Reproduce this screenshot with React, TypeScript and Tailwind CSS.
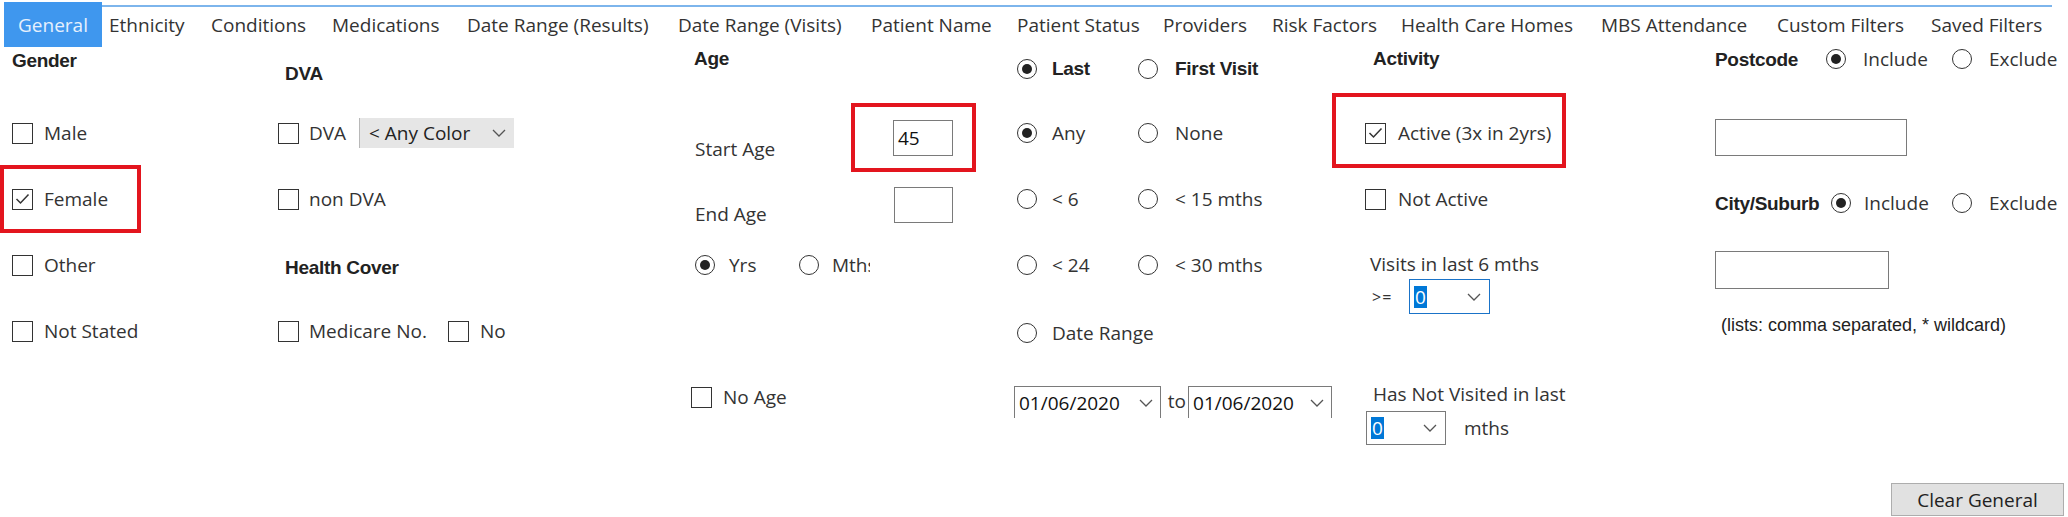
import React from "react";

const tabs: [string, string][] = [
  ["Ethnicity", "w-[102px]"],
  ["Conditions", "w-[121px]"],
  ["Medications", "w-[135px]"],
  ["Date Range (Results)", "w-[211px]"],
  ["Date Range (Visits)", "w-[193px]"],
  ["Patient Name", "w-[146px]"],
  ["Patient Status", "w-[146px]"],
  ["Providers", "w-[109px]"],
  ["Risk Factors", "w-[129px]"],
  ["Health Care Homes", "w-[200px]"],
  ["MBS Attendance", "w-[176px]"],
  ["Custom Filters", "w-[154px]"],
  ["Saved Filters", "w-[120px]"],
];

function Check({ checked = false }: { checked?: boolean }) {
  return (
    <span className="flex h-[21px] w-[21px] shrink-0 items-center justify-center border-[1.5px] border-[#333] bg-white">
      {checked && (
        <svg width="15" height="12" viewBox="0 0 15 12">
          <polyline points="1.5,6 5.5,10 13.5,1.5" fill="none" stroke="#333" strokeWidth="1.5" />
        </svg>
      )}
    </span>
  );
}

function Radio({ checked = false }: { checked?: boolean }) {
  return (
    <span className="flex h-[20px] w-[20px] shrink-0 items-center justify-center rounded-full border-[1.5px] border-[#333] bg-white">
      {checked && <span className="h-[10px] w-[10px] rounded-full bg-[#222]" />}
    </span>
  );
}

function Chevron() {
  return (
    <svg width="14" height="8" viewBox="0 0 14 8">
      <polyline points="1,1 7,7 13,1" fill="none" stroke="#555" strokeWidth="1.3" />
    </svg>
  );
}

function H({ children }: { children: React.ReactNode }) {
  return (
    <span className="font-['Liberation_Sans',Arial,sans-serif] text-[19px] font-bold tracking-[-0.3px] text-[#222]">
      {children}
    </span>
  );
}

function CheckRow({ label, checked }: { label: string; checked?: boolean }) {
  return (
    <div className="flex h-[66px] items-center gap-[11px]">
      <Check checked={checked} />
      <span>{label}</span>
    </div>
  );
}

function RadioPair({ a, b, aOn, bold }: { a: string; b?: string; aOn?: boolean; bold?: boolean }) {
  const txt = bold
    ? "whitespace-nowrap font-['Liberation_Sans',Arial,sans-serif] font-bold tracking-[-0.3px] text-[#222]"
    : "whitespace-nowrap";
  return (
    <div className="flex items-center pl-[3px]">
      <div className="flex w-[121px] items-center gap-[15px]">
        <Radio checked={aOn} />
        <span className={txt}>{a}</span>
      </div>
      {b && (
        <div className="flex items-center gap-[17px]">
          <Radio />
          <span className={txt}>{b}</span>
        </div>
      )}
    </div>
  );
}

function Combo({ blue }: { blue?: boolean }) {
  return (
    <div
      className={
        blue
          ? "flex h-[35px] w-[81px] items-center justify-between border border-[#1a73c8] bg-white pl-[4px] pr-[8px]"
          : "flex h-[34px] w-[80px] items-center justify-between border border-[#7a7a7a] bg-white pl-[4px] pr-[8px]"
      }
    >
      <span className="bg-[#0078d7] px-[1px] leading-[22px] text-white">0</span>
      <Chevron />
    </div>
  );
}

export default function App() {
  return (
    <div className="h-[517px] w-[2068px] overflow-hidden bg-white font-['Open_Sans',sans-serif] text-[19px] leading-[24px] text-[#333]">
      {/* tabs */}
      <div className="flex h-[47px]">
        <div className="ml-[4px] mt-[2px] flex h-[45px] w-[98px] items-center bg-[#3f97ee] pl-[14px] text-[#e6f0fd]">
          General
        </div>
        <div className="mr-[16px] mt-[5px] flex h-[38px] flex-1 items-center border-t-2 border-[#7db5ec] pl-[7px]">
          {tabs.map(([t, w]) => (
            <span key={t} className={w + " whitespace-nowrap"}>
              {t}
            </span>
          ))}
        </div>
      </div>

      <div className="flex h-[470px]">
        {/* gender */}
        <div className="ml-[12px] flex w-[266px] flex-col">
          <div className="flex h-[28px] items-center">
            <H>Gender</H>
          </div>
          <div className="mt-[25px]">
            <CheckRow label="Male" />
            <div className="relative">
              <CheckRow label="Female" checked />
              <div className="absolute left-[-12px] top-[-1px] h-[68px] w-[141px] border-4 border-[#e3151e]" />
            </div>
            <CheckRow label="Other" />
            <CheckRow label="Not Stated" />
          </div>
        </div>

        {/* dva */}
        <div className="flex w-[413px] flex-col">
          <div className="mt-[13px] flex h-[28px] items-center pl-[7px]">
            <H>DVA</H>
          </div>
          <div className="mt-[12px]">
            <div className="flex h-[66px] items-center">
              <Check />
              <span className="ml-[10px] w-[50px]">DVA</span>
              <div className="flex h-[30px] w-[155px] items-center justify-between border-l border-[#b8b8b8] bg-[#e6e6e6] pl-[9px] pr-[8px] text-[#222]">
                <span>&lt; Any Color</span>
                <Chevron />
              </div>
            </div>
            <div className="flex h-[66px] items-center gap-[10px]">
              <Check />
              <span>non DVA</span>
            </div>
            <div className="flex h-[66px] items-center pl-[7px] pt-[6px]">
              <H>Health Cover</H>
            </div>
            <div className="flex h-[66px] items-center">
              <Check />
              <span className="ml-[10px] w-[139px]">Medicare No.</span>
              <Check />
              <span className="ml-[11px]">No</span>
            </div>
          </div>
        </div>

        {/* age */}
        <div className="flex w-[323px] flex-col">
          <div className="flex h-[24px] items-center pl-[3px]">
            <H>Age</H>
          </div>
          <div className="mt-[29px]">
            <div className="flex h-[66px] items-start">
              <span className="mt-[37px] w-[202px] pl-[4px]">Start Age</span>
              <div className="relative mt-[20px] h-[36px] w-[60px] border border-[#7a7a7a] pl-[4px] leading-[34px] text-[#111]">
                45
                <div className="absolute left-[-43px] top-[-18px] h-[69px] w-[125px] border-4 border-[#e3151e]" />
              </div>
            </div>
            <div className="flex h-[66px] items-start">
              <span className="mt-[36px] w-[203px] pl-[4px]">End Age</span>
              <div className="mt-[21px] h-[36px] w-[59px] border border-[#7a7a7a]" />
            </div>
            <div className="flex h-[66px] items-center pl-[4px]">
              <div className="flex w-[104px] items-center gap-[14px]">
                <Radio checked />
                <span>Yrs</span>
              </div>
              <div className="flex items-center gap-[13px]">
                <Radio />
                <span className="w-[38px] overflow-hidden whitespace-nowrap">Mths</span>
              </div>
            </div>
            <div className="h-[66px]" />
            <CheckRow label="No Age" />
          </div>
        </div>

        {/* visit radios */}
        <div className="flex w-[318px] flex-col">
          <div className="flex h-[44px] items-center">
            <RadioPair a="Last" b="First Visit" aOn bold />
          </div>
          <div className="mt-[9px]">
            <div className="flex h-[66px] items-center">
              <RadioPair a="Any" b="None" aOn />
            </div>
            <div className="flex h-[66px] items-center">
              <RadioPair a="< 6" b="< 15 mths" />
            </div>
            <div className="flex h-[66px] items-center">
              <RadioPair a="< 24" b="< 30 mths" />
            </div>
            <div className="flex h-[66px] items-center pt-[4px]">
              <RadioPair a="Date Range" />
            </div>
          </div>
          <div className="mt-[22px] flex h-[32px] items-start">
            <div className="flex h-[32px] w-[152px] items-center justify-between border-x border-t border-[#7a7a7a] pl-[4px] pr-[7px] text-[#111]">
              <span>01/06/2020</span>
              <Chevron />
            </div>
            <span className="w-[28px] pl-[7px] leading-[30px]">to</span>
            <div className="flex h-[32px] w-[149px] items-center justify-between border-x border-t border-[#7a7a7a] pl-[4px] pr-[7px] text-[#111]">
              <span>01/06/2020</span>
              <Chevron />
            </div>
          </div>
        </div>

        {/* activity */}
        <div className="flex w-[383px] flex-col">
          <div className="flex h-[24px] items-center pl-[41px]">
            <H>Activity</H>
          </div>
          <div className="mt-[29px]">
            <div className="relative flex h-[66px] items-center gap-[12px] pl-[33px]">
              <Check checked />
              <span>Active (3x in 2yrs)</span>
              <div className="absolute left-0 top-[-7px] h-[75px] w-[234px] border-4 border-[#e3151e]" />
            </div>
            <div className="flex h-[66px] items-center gap-[12px] pl-[33px]">
              <Check />
              <span>Not Active</span>
            </div>
          </div>
          <span className="mt-[20px] pl-[38px]">Visits in last 6 mths</span>
          <div className="mt-[3px] flex items-center pl-[40px]">
            <span className="w-[37px] text-[16px] tracking-[1px]">&gt;=</span>
            <Combo blue />
          </div>
          <span className="mt-[68px] pl-[41px]">Has Not Visited in last</span>
          <div className="mt-[5px] flex items-center pl-[34px]">
            <Combo />
            <span className="ml-[18px]">mths</span>
          </div>
        </div>

        {/* postcode */}
        <div className="flex flex-1 flex-col">
          <div className="flex h-[24px] items-center">
            <span className="w-[111px]">
              <H>Postcode</H>
            </span>
            <div className="flex w-[126px] items-center gap-[17px]">
              <Radio checked />
              <span>Include</span>
            </div>
            <div className="flex items-center gap-[17px]">
              <Radio />
              <span>Exclude</span>
            </div>
          </div>
          <div className="mt-[48px] h-[37px] w-[192px] border border-[#7a7a7a]" />
          <div className="mt-[35px] flex h-[24px] items-center">
            <span className="w-[116px] whitespace-nowrap">
              <H>City/Suburb</H>
            </span>
            <div className="flex w-[121px] items-center gap-[13px]">
              <Radio checked />
              <span>Include</span>
            </div>
            <div className="flex items-center gap-[17px]">
              <Radio />
              <span>Exclude</span>
            </div>
          </div>
          <div className="mt-[36px] h-[38px] w-[174px] border border-[#7a7a7a]" />
          <span className="mt-[24px] pl-[6px] font-['Liberation_Sans',Arial,sans-serif] text-[18px] text-[#222]">
            (lists: comma separated, * wildcard)
          </span>
          <button className="mb-[1px] mr-[4px] mt-auto h-[33px] w-[173px] self-end border border-[#adadad] bg-[#e1e1e1] text-[19px] text-[#222]">
            Clear General
          </button>
        </div>
      </div>
    </div>
  );
}
